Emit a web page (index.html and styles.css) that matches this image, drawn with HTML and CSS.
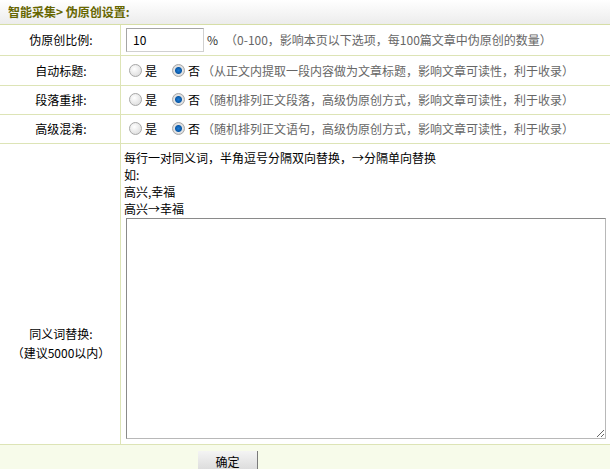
FILE: index.html
```html
<!DOCTYPE html>
<html lang="zh-CN">
<head>
  <meta charset="UTF-8" />
  <title>伪原创设置</title>
  <link rel="stylesheet" href="styles.css">
</head>
<body>

  <div class="title">智能采集&gt; 伪原创设置:</div>

  <table class="form-table">
    <tr class="row-1">
      <td class="label">伪原创比例:</td>
      <td class="value">
        <div class="line">
          <input type="text" class="text-input" value="10">
          <span class="unit">%</span>
          <span class="hint">（0-100，影响本页以下选项，每100篇文章中伪原创的数量）</span>
        </div>
      </td>
    </tr>
    <tr class="row-2">
      <td class="label">自动标题:</td>
      <td class="value">
        <div class="line">
          <label class="opt"><input type="radio" name="autotitle"><span>是</span></label>
          <label class="opt"><input type="radio" name="autotitle" checked><span>否</span></label>
          <span class="hint">（从正文内提取一段内容做为文章标题，影响文章可读性，利于收录）</span>
        </div>
      </td>
    </tr>
    <tr class="row-3">
      <td class="label">段落重排:</td>
      <td class="value">
        <div class="line">
          <label class="opt"><input type="radio" name="para"><span>是</span></label>
          <label class="opt"><input type="radio" name="para" checked><span>否</span></label>
          <span class="hint">（随机排列正文段落，高级伪原创方式，影响文章可读性，利于收录）</span>
        </div>
      </td>
    </tr>
    <tr class="row-4">
      <td class="label">高级混淆:</td>
      <td class="value">
        <div class="line">
          <label class="opt"><input type="radio" name="mix"><span>是</span></label>
          <label class="opt"><input type="radio" name="mix" checked><span>否</span></label>
          <span class="hint">（随机排列正文语句，高级伪原创方式，影响文章可读性，利于收录）</span>
        </div>
      </td>
    </tr>
    <tr class="row-5">
      <td class="label label-tall">同义词替换:<br>（建议5000以内）</td>
      <td class="value value-tall">
        <div class="notes">
          每行一对同义词，半角逗号分隔双向替换，→分隔单向替换<br>
          如:<br>
          高兴,幸福<br>
          高兴→幸福
        </div>
        <textarea class="words"></textarea>
      </td>
    </tr>
  </table>

  <div class="footer">
    <button class="btn">确定</button>
  </div>

</body>
</html>
```

FILE: styles.css
```css
* {
  margin: 0; padding: 0; box-sizing: border-box;
}

html, body {
  width: 610px;
  height: 469px;
  overflow: hidden;
  background: #fff;
  font-family: "Noto Sans CJK SC", "Liberation Sans", sans-serif;
  font-size: 12px;
  color: #000;
}

.title {
  height: 25px;
  line-height: 24px;
  padding-left: 8px;
  font-weight: bold;
  color: #666600;
  background: linear-gradient(#ffffff, #ececec);
  border-bottom: 1px solid #d6dea6;
}

.form-table {
  width: 610px;
  border-collapse: collapse;
}

.form-table td {
  border-bottom: 1px solid #dde4b6;
  vertical-align: middle;
}

.label {
  width: 122px;
  border-right: 1px solid #dde4b6;
  text-align: center;
  padding-left: 2px;
}

.value {
  padding-left: 5px;
}

.row-1 td { height: 30px; }
.row-2 td { height: 30px; }
.row-3 td { height: 29px; }
.row-4 td { height: 29px; }
.row-5 td { height: 301px; }

.line {
  display: flex;
  align-items: center;
  white-space: nowrap;
}

.text-input {
  width: 78px;
  height: 24px;
  border: 1px solid #a5a5a5;
  border-right-color: #d0d0d0;
  border-bottom-color: #d0d0d0;
  padding-left: 6px;
  font-family: inherit;
  font-size: 12px;
}

.unit {
  margin-left: 3px;
  color: #333;
}

.hint {
  color: #666;
  margin-left: 2px;
}

.row-1 .hint {
  margin-left: 7px;
}

.opt {
  display: flex;
  align-items: center;
}

.opt + .opt {
  margin-left: 12px;
}

.opt span {
  margin-left: 3px;
}

.opt input {
  appearance: none;
  width: 13px;
  height: 13px;
  border-radius: 50%;
  border: 1px solid #a8a8a8;
  background: radial-gradient(circle at 40% 35%, #ffffff, #d6d6d6);
  margin-left: 3px;
}

.opt input:checked {
  background: radial-gradient(circle, #1e7cd6 0, #0b5aa8 3px, #e6e6e6 4px, #c8c8c8 100%);
}

.label-tall {
  vertical-align: top !important;
  padding-top: 180px;
  line-height: 19px;
}

.value-tall {
  vertical-align: top !important;
  padding: 5px 4px 0 3px;
}

.notes {
  line-height: 17px;
}

.words {
  display: block;
  width: 480px;
  height: 221px;
  margin: 1px 0 0 2px;
  border: 1px solid #b8b8b8;
  border-left-color: #8a8a8a;
  border-top-color: #8a8a8a;
}

.footer {
  height: 25px;
  background: #f7fbea;
  padding: 6px 0 0 198px;
}

.btn {
  width: 60px;
  height: 22px;
  font-family: inherit;
  font-size: 12px;
  color: #000;
  border: none;
  border-right: 1px solid #7a7a7a;
  background: linear-gradient(#f4f4f4, #d8d8d8);
}
```
